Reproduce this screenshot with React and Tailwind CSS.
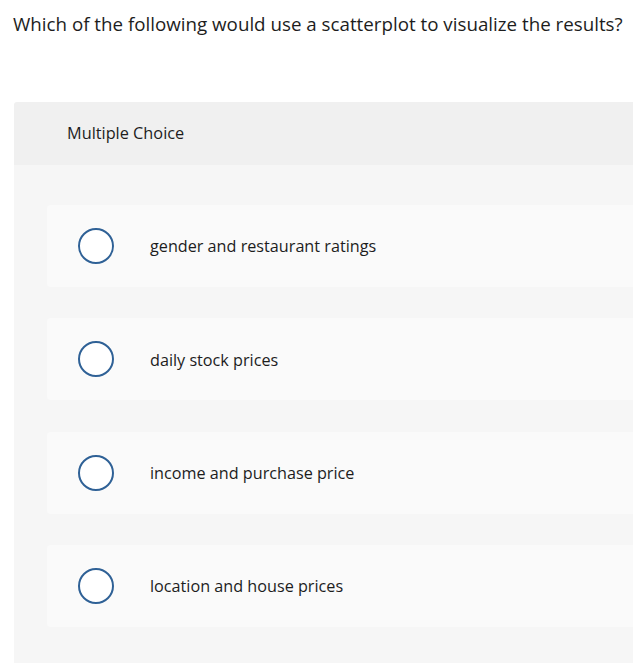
export default function App() {
  const options = [
    "gender and restaurant ratings",
    "daily stock prices",
    "income and purchase price",
    "location and house prices",
  ];
  return (
    <div className="w-[633px] h-[663px] overflow-hidden bg-white" style={{ fontFamily: "'Open Sans', Roboto, sans-serif" }}>
      <div className="pl-[13px] pt-[12px] text-[18.75px] leading-[24px] text-[#1d1d1d] whitespace-nowrap">
        Which of the following would use a scatterplot to visualize the results?
      </div>
      <div className="ml-[14px] mt-[66px] w-[640px] rounded-tl-[3px] overflow-hidden">
        <div className="h-[63px] bg-[#f0f0f0] pl-[53px] flex items-center text-[16.3px] text-[#1d1d1d]">
          Multiple Choice
        </div>
        <div className="bg-[#f6f6f6] pt-[40px] pl-[33px] pb-[40px] flex flex-col gap-[31.33px]">
          {options.map((o) => (
            <div key={o} className="h-[82px] bg-[#fafafa] rounded-l-[4px] flex items-center">
              <div className="ml-[31px] w-[36px] h-[36px] rounded-full border-2 border-[#2f6196] bg-white shrink-0" />
              <div className="ml-[36px] pt-[1px] text-[16.2px] text-[#1d1d1d]">{o}</div>
            </div>
          ))}
        </div>
      </div>
    </div>
  );
}
